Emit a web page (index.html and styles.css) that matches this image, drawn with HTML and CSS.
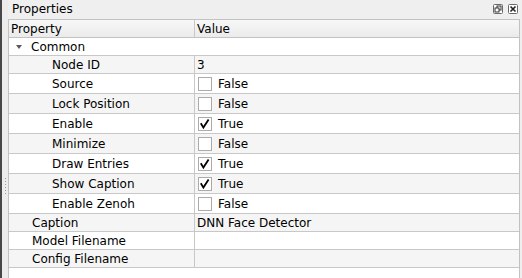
FILE: index.html
```html
<!DOCTYPE html>
<html lang="en">

<head>
	<meta charset="UTF-8" />
	<meta name="viewport" content="width=device-width, initial-scale=1.0" />
	<title>Properties</title>
	<link rel="stylesheet" href="styles.css">
</head>

<body>
	<div class="window">
		<!-- splitter handle on the left -->
		<div class="splitter">
			<div class="grip">
				<span></span><span></span><span></span><span></span><span></span><span></span>
			</div>
		</div>

		<div class="dock">
			<div class="dock-title">
				<span class="dock-name">Properties</span>
				<div class="dock-buttons">
					<svg class="dock-btn" width="10" height="10" viewBox="0 0 10 10">
						<rect x="0.5" y="0.5" width="9" height="9" rx="1" fill="#fff" stroke="#6a6a6a" />
						<rect x="4" y="2" width="4" height="4" fill="none" stroke="#333" />
						<rect x="2" y="4" width="4" height="4" fill="#fff" stroke="#333" />
					</svg>
					<svg class="dock-btn" width="10" height="10" viewBox="0 0 10 10">
						<rect x="0.5" y="0.5" width="9" height="9" rx="1" fill="#fff" stroke="#6a6a6a" />
						<path d="M2.5 2.5 L7.5 7.5 M7.5 2.5 L2.5 7.5" stroke="#222" stroke-width="1.6" />
					</svg>
				</div>
			</div>

			<div class="tree">
				<div class="tree-head">
					<div class="cell name">Property</div>
					<div class="cell value">Value</div>
				</div>

				<div class="row group">
					<div class="cell name lvl1"><span class="arrow"></span>Common</div>
				</div>
				<div class="row alt">
					<div class="cell name lvl2">Node ID</div>
					<div class="cell value">3</div>
				</div>
				<div class="row tall">
					<div class="cell name lvl2">Source</div>
					<div class="cell value"><span class="check"></span>False</div>
				</div>
				<div class="row tall alt">
					<div class="cell name lvl2">Lock Position</div>
					<div class="cell value"><span class="check"></span>False</div>
				</div>
				<div class="row tall">
					<div class="cell name lvl2">Enable</div>
					<div class="cell value"><span class="check on"><svg width="12" height="12" viewBox="0 0 12 12"><path d="M1.8 5.2 L4.4 9.6 L9.6 1.6" fill="none" stroke="#000" stroke-width="1.8" /></svg></span>True</div>
				</div>
				<div class="row tall alt">
					<div class="cell name lvl2">Minimize</div>
					<div class="cell value"><span class="check"></span>False</div>
				</div>
				<div class="row tall">
					<div class="cell name lvl2">Draw Entries</div>
					<div class="cell value"><span class="check on"><svg width="12" height="12" viewBox="0 0 12 12"><path d="M1.8 5.2 L4.4 9.6 L9.6 1.6" fill="none" stroke="#000" stroke-width="1.8" /></svg></span>True</div>
				</div>
				<div class="row tall alt">
					<div class="cell name lvl2">Show Caption</div>
					<div class="cell value"><span class="check on"><svg width="12" height="12" viewBox="0 0 12 12"><path d="M1.8 5.2 L4.4 9.6 L9.6 1.6" fill="none" stroke="#000" stroke-width="1.8" /></svg></span>True</div>
				</div>
				<div class="row tall">
					<div class="cell name lvl2">Enable Zenoh</div>
					<div class="cell value"><span class="check"></span>False</div>
				</div>
				<div class="row alt">
					<div class="cell name lvl1">Caption</div>
					<div class="cell value">DNN Face Detector</div>
				</div>
				<div class="row">
					<div class="cell name lvl1">Model Filename</div>
					<div class="cell value"></div>
				</div>
				<div class="row alt">
					<div class="cell name lvl1">Config Filename</div>
					<div class="cell value"></div>
				</div>
			</div>
		</div>
	</div>
</body>

</html>
```

FILE: styles.css
```css
html,
body {
	margin: 0;
	height: 100%;
	overflow: hidden;
}

body {
	background: #efefef;
	font-family: "DejaVu Sans", sans-serif;
	font-size: 12px;
	color: #000;
}

.window {
	display: flex;
	height: 100%;
}

/* splitter */
.splitter {
	width: 6px;
	border-left: 2px solid #474747;
	background: #ececec;
	display: flex;
	flex-direction: column;
	align-items: center;
	padding-top: 178px;
}

.grip {
	display: flex;
	flex-direction: column;
	gap: 2px;
}

.grip span {
	width: 1px;
	height: 1px;
	background: #9a9a9a;
}

/* dock */
.dock {
	flex: 1;
	display: flex;
	flex-direction: column;
	min-width: 0;
}

.dock-title {
	height: 19px;
	display: flex;
	align-items: center;
	padding: 0 4px 0 4px;
}

.dock-name {
	flex: 1;
	line-height: 19px;
	padding-bottom: 1px;
}

.dock-buttons {
	display: flex;
	gap: 5px;
	align-self: flex-start;
	padding-top: 4px;
}

.dock-btn {
	display: block;
}

/* tree */
.tree {
	flex: 1;
	margin-right: 2px;
	background: #fff;
	border: 1px solid #c2c2c2;
	border-bottom: none;
}

.tree-head,
.row {
	display: grid;
	grid-template-columns: 186px 1fr;
	border-bottom: 1px solid #c8c8c8;
}

.tree-head {
	height: 17px;
	background: linear-gradient(#f7f7f7, #ebebeb);
	border-bottom-color: #c2c2c2;
}

.row {
	height: 17px;
}

.row.tall {
	height: 19px;
}

.row.alt {
	background: #f5f5f5;
}

.cell {
	box-sizing: border-box;
	display: flex;
	align-items: center;
	white-space: nowrap;
	overflow: hidden;
}

.cell.name {
	padding-left: 2px;
	border-right: 1px solid #c8c8c8;
}

.cell.value {
	padding-left: 2px;
}

.row.group .cell.name {
	border-right: none;
	grid-column: 1 / 3;
}

.cell.lvl1 {
	padding-left: 23px;
}

.cell.lvl2 {
	padding-left: 43px;
}

.arrow {
	width: 0;
	height: 0;
	border-left: 3.5px solid transparent;
	border-right: 3.5px solid transparent;
	border-top: 4px solid #5a5a5a;
	margin-left: -16px;
	margin-right: 9px;
}

/* checkbox */
.check {
	box-sizing: border-box;
	width: 14px;
	height: 14px;
	margin-left: 1px;
	margin-right: 6px;
	border: 1px solid #ababab;
	background: #fff;
	display: flex;
	align-items: center;
	justify-content: center;
}

.check svg {
	display: block;
}
```
